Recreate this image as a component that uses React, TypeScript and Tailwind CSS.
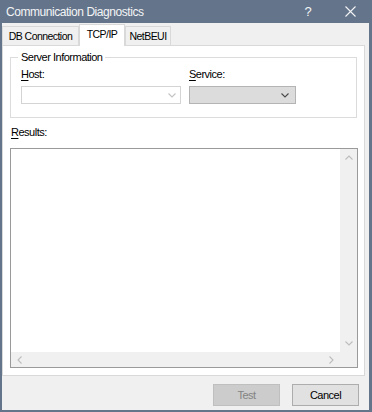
import { ReactNode } from 'react';

type Dir = 'up' | 'down' | 'left' | 'right';

const points: Record<Dir, string> = {
  up: '0.5,4.5 4,1 7.5,4.5',
  down: '0.5,0.5 4,4 7.5,0.5',
  left: '4.5,0.5 1,4 4.5,7.5',
  right: '0.5,0.5 4,4 0.5,7.5',
};

function Chevron({ dir, color }: { dir: Dir; color: string }) {
  const flat = dir === 'up' || dir === 'down';
  return (
    <svg
      width={flat ? 8 : 5}
      height={flat ? 5 : 8}
      viewBox={flat ? '0 0 8 5' : '0 0 5 8'}
      fill="none"
    >
      <polyline points={points[dir]} stroke={color} strokeWidth="1.1" />
    </svg>
  );
}

function Tab({ children, active, width }: { children: ReactNode; active?: boolean; width: string }) {
  return active ? (
    <div className={`relative z-10 -mb-px h-[22px] ${width} flex justify-center items-start pt-[3px] bg-white border border-b-0 border-[#d9d9d9] text-black`}>
      {children}
    </div>
  ) : (
    <div className={`h-[19px] ${width} flex justify-center items-center bg-[#f0f0f0] border border-b-0 border-[#d9d9d9] text-black`}>
      {children}
    </div>
  );
}

function App() {
  return (
    <div className="w-[372px] h-[412px] bg-[#64748b] flex flex-col font-['Liberation_Sans',Arial,sans-serif] select-none">
      {/* title bar */}
      <div className="h-[23px] flex items-center text-[12px] tracking-[-0.45px] text-[#f3f4f6]">
        <span className="pl-[6px] flex-1">Communication Diagnostics</span>
        <span className="w-[42px] flex justify-center text-[13px] tracking-normal">?</span>
        <span className="w-[42px] mr-px flex justify-center">
          <svg width="11" height="11" viewBox="0 0 11 11">
            <path d="M0.5 0.5 L10.5 10.5 M10.5 0.5 L0.5 10.5" stroke="#f3f4f6" strokeWidth="1.1" />
          </svg>
        </span>
      </div>

      {/* dialog body */}
      <div className="flex-1 ml-[2px] mr-[3px] mb-[2px] bg-[#f0f0f0] flex flex-col text-[11px] tracking-[-0.5px] leading-[13px]">
        <div className="h-[22px] flex items-end text-[10.5px] tracking-[-0.55px]">
          <Tab width="w-[77px]">DB Connection</Tab>
          <Tab active width="w-[46px]">TCP/IP</Tab>
          <Tab width="w-[46px]">NetBEUI</Tab>
        </div>

        <div className="w-[363px] h-[331px] bg-white border border-[#d9d9d9] flex flex-col">
          <fieldset className="ml-[7px] mt-[5px] w-[347px] h-[67px] border border-[#dcdcdc] px-[10px]">
            <legend className="-ml-[3px] px-[3px] leading-[13px]">Server Information</legend>
            <div className="flex gap-[8px] mt-[4px]">
              <div className="flex flex-col">
                <span className="h-[13px]">
                  <u className="underline-offset-[2px]">H</u>ost:
                </span>
                <div className="mt-[5px] w-[160px] h-[18px] bg-white border border-[#d4d4d4] flex items-center justify-end pr-[4px]">
                  <Chevron dir="down" color="#c4c4c4" />
                </div>
              </div>
              <div className="flex flex-col">
                <span className="h-[13px]">
                  <u className="underline-offset-[2px]">S</u>ervice:
                </span>
                <div className="mt-[5px] w-[107px] h-[18px] bg-[#dcdcdc] border border-[#b4b4b4] flex items-center justify-end pr-[6px]">
                  <Chevron dir="down" color="#4a4a4a" />
                </div>
              </div>
            </div>
          </fieldset>

          <span className="ml-[8px] mt-[8px] h-[13px]">
            <u className="underline-offset-[2px]">R</u>esults:
          </span>

          <div className="ml-[7px] mt-[9px] w-[348px] h-[220px] bg-white border border-[#9a9a9a] flex flex-col">
            <div className="flex-1 flex">
              <div className="flex-1" />
              <div className="w-[17px] bg-[#f0f0f0] flex flex-col justify-between">
                <div className="h-[17px] flex items-center justify-center">
                  <Chevron dir="up" color="#bdbdbd" />
                </div>
                <div className="h-[17px] flex items-center justify-center">
                  <Chevron dir="down" color="#bdbdbd" />
                </div>
              </div>
            </div>
            <div className="h-[15px] flex bg-[#f0f0f0]">
              <div className="flex-1 flex justify-between">
                <div className="w-[17px] flex items-center justify-center">
                  <Chevron dir="left" color="#bdbdbd" />
                </div>
                <div className="w-[17px] flex items-center justify-center">
                  <Chevron dir="right" color="#bdbdbd" />
                </div>
              </div>
              <div className="w-[17px]" />
            </div>
          </div>
        </div>

        {/* buttons */}
        <div className="flex-1 flex justify-end items-start gap-[12px] pt-[8px] pr-[10px]">
          <button className="w-[67px] h-[22px] bg-[#cccccc] border border-[#bfbfbf] text-[#838383]">
            Test
          </button>
          <button className="w-[67px] h-[22px] bg-[#e1e1e1] border border-[#adadad] text-black">
            Cancel
          </button>
        </div>
      </div>
    </div>
  );
}

export default App;
